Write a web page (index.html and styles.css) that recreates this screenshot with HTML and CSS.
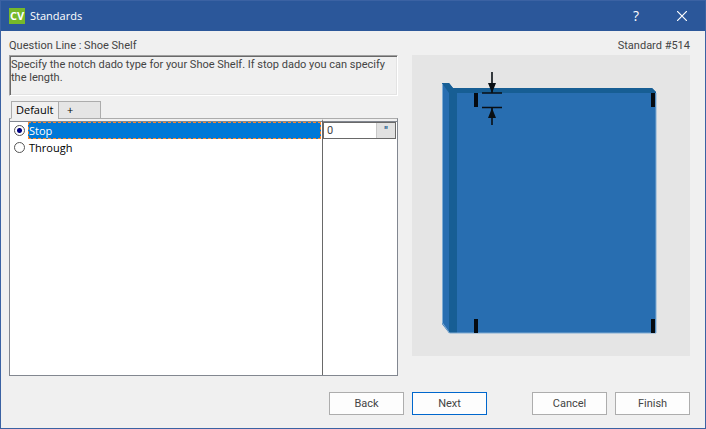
FILE: index.html
```html
<!DOCTYPE html>
<html lang="en">
<head>
<meta charset="utf-8">
<title>Standards</title>
<link rel="stylesheet" href="styles.css">
</head>
<body>
<div class="window">
  <header class="titlebar">
    <svg class="logo" viewBox="0 0 16 16" aria-hidden="true"><rect width="16" height="16" fill="#76b82a"/><text class="logo-text" x="8" y="12" text-anchor="middle">CV</text></svg>
    <h1 class="title">Standards</h1>
    <button class="caption" type="button" aria-label="Help">?</button>
    <button class="caption" type="button" aria-label="Close"><svg class="close" viewBox="0 0 10 10"><path d="M0 0l10 10M10 0L0 10" stroke="#fff" stroke-width="1.200"/></svg></button>
  </header>
  <main class="content">
    <section class="question">
      <label class="heading" for="description">Question Line : Shoe Shelf</label>
      <textarea class="description" id="description" readonly>Specify the notch dado type for your Shoe Shelf. If stop dado you can specify the length.</textarea>
      <div class="tabs" role="tablist">
        <button class="tab active" type="button" role="tab" aria-selected="true">Default</button>
        <button class="tab" type="button" role="tab" aria-selected="false">+</button>
      </div>
      <div class="panel">
        <div class="options">
          <label class="option"><input class="radio" type="radio" name="dado" checked><span class="option-text">Stop</span></label>
          <label class="option"><input class="radio" type="radio" name="dado"><span class="option-text">Through</span></label>
        </div>
        <div class="values">
          <div class="field">
            <input class="value" type="text" value="0" aria-label="Stop length">
            <button class="unit" type="button">"</button>
          </div>
        </div>
      </div>
    </section>
    <aside class="preview">
      <p class="heading standard">Standard #514</p>
      <svg class="drawing" viewBox="0 0 278 301" role="img" aria-label="Shelf panel with notches">
        <rect width="278" height="301" fill="#e5e5e5"/>
        <path d="M30 28h7l4 5h199l4 4v241H37l-7-9z" fill="#286eb1"/>
        <path d="M30 28h7l4 5h199l4 4v1H45v240h-8V38z" fill="#175e94"/>
        <path d="M30.500 29v239l7 10h206.500V38" fill="none" stroke="#80acd3" stroke-width="1"/>
        <path d="M62 38h4v14h-4zM239 38h4v14h-4zM62 264h4v14h-4zM239 264h4v14h-4z" fill="#050b11"/>
        <path d="M80 17v21M80 52v18M70 38h20M70 52.500h20" fill="none" stroke="#090f14" stroke-width="1.600"/>
        <path d="M76 28h8l-4 10zM76 63h8l-4-10z" fill="#090f14"/>
      </svg>
    </aside>
  </main>
  <footer class="footer">
    <button class="button" type="button">Back</button>
    <button class="button primary" type="button">Next</button>
    <button class="button cancel" type="button">Cancel</button>
    <button class="button" type="button">Finish</button>
  </footer>
</div>
</body>
</html>
```
FILE: styles.css
```css
* { box-sizing: border-box; }
body { margin: 0; background: #f0f0f0; }
button, input, textarea { margin: 0; font: inherit; color: inherit; }
.window {
  display: flex;
  flex-direction: column;
  min-height: 100vh;
  border: 1px solid #3b62a3;
  background: #f0f0f0;
  color: #444;
  font: 11px/13px "Roboto", sans-serif;
}
.titlebar {
  display: flex;
  align-items: center;
  height: 30px;
  padding-left: 8px;
  background: #2b579a;
  color: #fff;
  font: 11px/16px "Open Sans", sans-serif;
}
.logo { width: 16px; height: 16px; }
.logo-text { fill: #fff; font: bold 11px "Open Sans", sans-serif; }
.title { flex: 1; margin: 0 0 0 5px; font: inherit; }
.caption {
  display: grid;
  place-items: center;
  width: 46px;
  height: 30px;
  padding: 0;
  border: 0;
  background: none;
  font-size: 14px;
}
.close { width: 10px; height: 10px; }
.content {
  flex: 1;
  display: grid;
  grid-template-columns: 389fr 278fr;
  gap: 14px;
  padding: 8px 15px 0 8px;
}
.question { display: flex; flex-direction: column; }
.heading { display: block; height: 16px; margin: 0; line-height: 14px; }
.standard { text-align: right; }
.description {
  display: block;
  width: 100%;
  height: 41px;
  padding: 2px 0 0 1px;
  border: 1px solid;
  border-color: #a0a0a0 #fff #fff #a0a0a0;
  box-shadow: inset 1px 1px #696969, inset -1px -1px #e3e3e3;
  outline: 0;
  overflow: hidden;
  resize: none;
  background: #f0f0f0;
}
.tabs {
  display: flex;
  z-index: 1;
  margin: 5px 0 -1px 2px;
  font: 11px/14px "Open Sans", sans-serif;
  color: #000;
}
.tab {
  width: 43px;
  height: 18px;
  margin-left: -1px;
  padding: 0 4px 0 8px;
  border: 1px solid #acacac;
  background: #e5e5e5;
  text-align: left;
}
.tab.active {
  width: 48px;
  margin-left: 0;
  padding-left: 4px;
  border-bottom-color: #f0f0f0;
  background: #f0f0f0;
}
.panel {
  flex: 1;
  display: grid;
  grid-template-columns: 1fr 75px;
  border: 1px solid #828790;
  border-top-color: #acacac;
  background: #fff;
}
.options, .values { border-top: 2px solid #f0f0f0; box-shadow: inset 0 1px #828790; }
.options { padding-top: 1px; font: 11px/17px "Open Sans", sans-serif; color: #000; }
.values { padding: 1px 1px 0 0; border-left: 1px solid #696969; }
.option { display: flex; align-items: center; gap: 3px; height: 17px; padding-left: 4px; }
.radio {
  appearance: none;
  width: 11px;
  height: 11px;
  border: 1px solid #555;
  border-radius: 50%;
  background: #fff;
}
.radio:checked { background: radial-gradient(circle, #000080 2px, #fff 3px); }
.option-text { flex: 1; height: 17px; padding-left: 1px; }
.radio:checked + .option-text {
  margin-right: 1px;
  outline: 1px dashed #ff8728;
  outline-offset: -1px;
  background: #0078d7;
  color: #fff;
}
.field { display: flex; height: 17px; border: 1px solid #696969; }
.value { flex: 1; min-width: 0; padding: 0 3px; border: 0; outline: 0; background: #fff; }
.unit {
  width: 19px;
  padding: 0;
  border: 1px solid #c8c8c8;
  border-width: 0 0 0 1px;
  background: #e1e1e1;
  color: #145b8e;
  font-weight: bold;
}
.preview { display: flex; flex-direction: column; }
.drawing { display: block; width: 100%; }
.footer {
  display: flex;
  justify-content: flex-end;
  gap: 8px;
  padding: 16px 15px 13px;
}
.button {
  width: 75px;
  height: 23px;
  padding: 0;
  border: 1px solid #adadad;
  background: #fdfdfd;
}
.primary { border-color: #0067cd; }
.cancel { margin-left: 37px; }
```
